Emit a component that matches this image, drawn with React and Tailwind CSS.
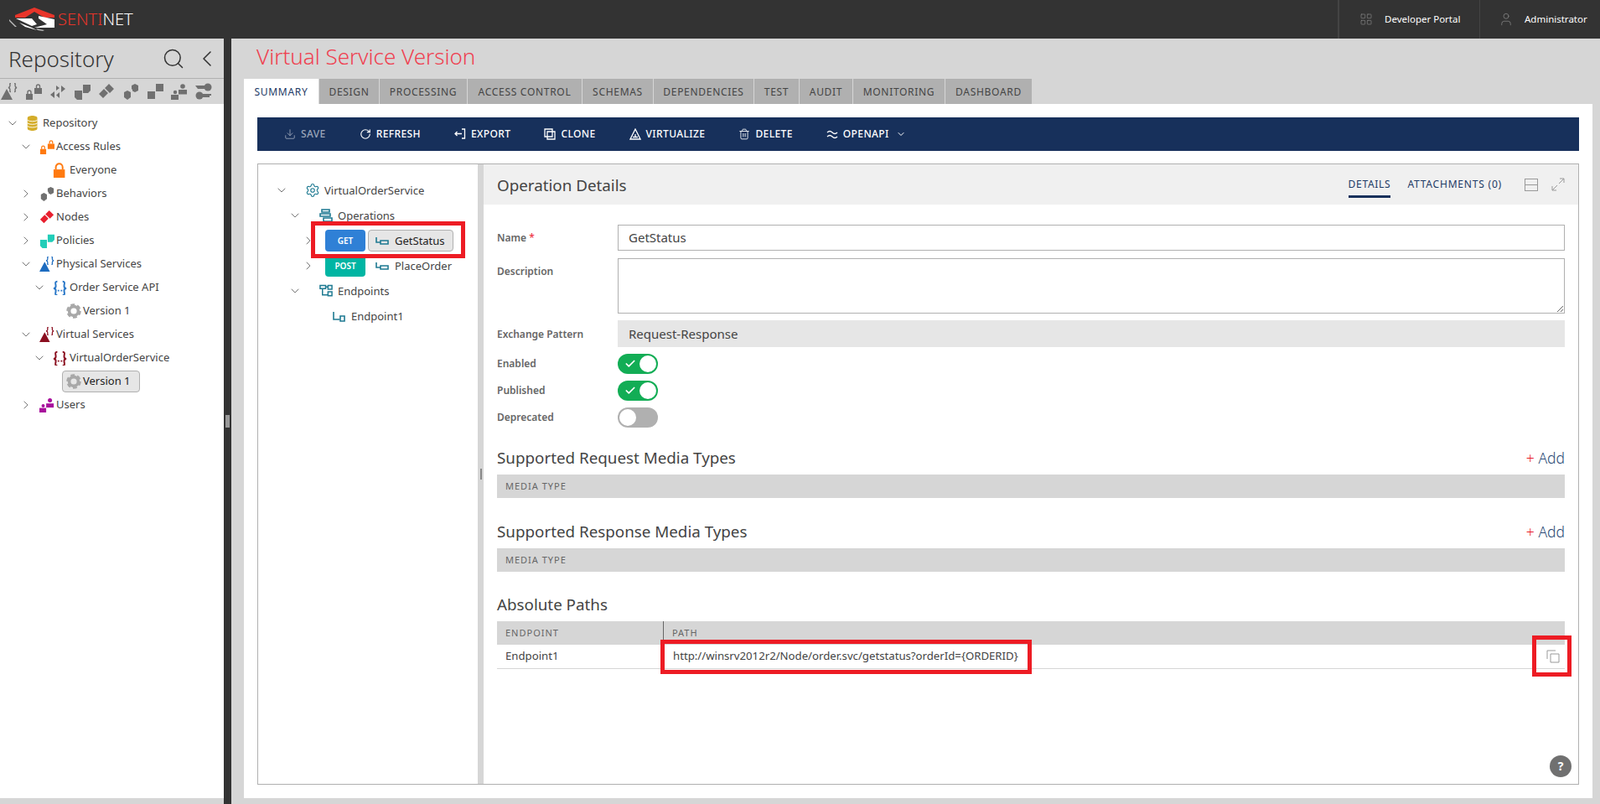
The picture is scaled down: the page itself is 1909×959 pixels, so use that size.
import React from 'react';
import { ChevronDown, ChevronRight, Search, ChevronLeft, Settings, LayoutGrid, User, RotateCw, Download, Trash2, Check } from 'lucide-react';

const Tri = ({ color }) => (
  <>
    <path d="M0 20 L7 7 L14 20 Z" fill={color} />
    <path d="M12 0.500c-2 0-1 1.500-1 2.500s0 2-2 2.500c2 .5 2 1.500 2 2.500s-1 2.500 1 2.500M16 0.500c2 0 1 1.500 1 2.500s0 2 2 2.500c-2 .5-2 1.500-2 2.500s1 2.500-1 2.500" fill="none" stroke={color} strokeWidth="1.400" />
  </>
);
const Locks = ({ color }) => (
  <>
    <path d="M1 13h8v7H1zM11 6h9v7h-9z" fill={color} />
    <path d="M3 13v-2a2 2 0 0 1 4 0v2M13.500 6V4a2 2 0 0 1 4 0v2" fill="none" stroke={color} strokeWidth="1.400" />
  </>
);
const Arrows = ({ color }) => (
  <path d="M1 14l5-4v8zM19 7l-5-4v8zM8 9V3l4 3-4 3zM12 11v7l-4-3.500z" fill={color} />
);
const Pages = ({ color }) => <path d="M1 9h9v11H4l-3-3zM11 2h9v7l-3 3h-6z" fill={color} />;
const Diamonds = ({ color }) => <path d="M1 13l6-6 5 5-6 6zM8 6l5-5 6 6-5 5z" fill={color} />;
const Hexes = ({ color }) => <path d="M2 11l4-2 4 2v6l-4 3-4-3zM11 3l4-2 4 2v6l-4 2-3-1.500V8l-1-1z" fill={color} />;
const Squares = ({ color }) => <path d="M1 10h9v9H1zM11 1h9v9h-9z" fill={color} />;
const People = ({ color }) => (
  <>
    <circle cx="5" cy="11" r="2.200" fill={color} />
    <path d="M0 14h9v6H0z" fill={color} />
    <circle cx="14" cy="4" r="2.800" fill={color} />
    <path d="M9 8h10v5.500H9z" fill={color} />
  </>
);
const Keys = ({ color }) => (
  <>
    <circle cx="15" cy="5" r="4.500" fill={color} />
    <path d="M0 3h12v4H3z" fill={color} />
    <circle cx="5" cy="15" r="4.500" fill={color} />
    <path d="M8 13h11v2h-2v2H8z" fill={color} />
  </>
);
const Database = ({ color }) => (
  <>
    <path d="M2 3c0-4 13-4 13 0v14c0 4-13 4-13 0z" fill={color} />
    <path d="M2 6c3 2 10 2 13 0M2 10c3 2 10 2 13 0M2 14c3 2 10 2 13 0" fill="none" stroke="#fff" strokeWidth="1" />
  </>
);
const Lock = ({ color }) => (
  <>
    <path d="M1 9h15v11H1z" fill={color} />
    <path d="M4 9V6a4.500 4.500 0 0 1 9 0v3" fill="none" stroke={color} strokeWidth="2.200" />
  </>
);
const Braces = ({ color }) => (
  <>
    <path d="M6 2C2 2 4 5 4 8s-3 3-3 3 3 0 3 3-2 6 2 6M13 2c4 0 2 3 2 6s3 3 3 3-3 0-3 3 2 6-2 6" fill="none" stroke={color} strokeWidth="2.200" />
    <path d="M6.500 13h2v2h-2zM10.500 13h2v2h-2z" fill={color} />
  </>
);
const Gear = ({ color }) => (
  <>
    <circle cx="10" cy="10" r="6" fill="none" stroke={color} strokeWidth="4" />
    <circle cx="10" cy="10" r="8.500" fill="none" stroke={color} strokeWidth="2.500" strokeDasharray="5.500 3.400" />
  </>
);
const Ops = () => (
  <g fill="none" stroke="#1f7a92" strokeWidth="1.600">
    <path d="M3 1h9v3H3zM1 6h12v3H1zM5 11h10v4H5z" />
  </g>
);
const EpTree = () => (
  <g fill="none" stroke="#1f7a92" strokeWidth="1.600">
    <path d="M1 1h7v4H1zM11 1h5v5h-5zM11 9h5v5h-5zM4 5v8h7M8 3h3" />
  </g>
);
const OpLine = () => (
  <g fill="none" stroke="#1f7a92" strokeWidth="1.600">
    <path d="M1 1v6h5M6 5h9v4H6z" />
  </g>
);
const EpLine = () => (
  <g fill="none" stroke="#1f7a92" strokeWidth="1.600">
    <path d="M1 1v9h7M9 6h5v6H9z" />
  </g>
);

const sideIcons = [Tri, Locks, Arrows, Pages, Diamonds, Hexes, Squares, People, Keys];

const repoRows = [
  { pad: 'pl-[7px]', open: true, icon: Database, color: '#d4ad2a', label: 'Repository' },
  { pad: 'pl-[23px]', open: true, icon: Locks, color: '#ff7a10', label: 'Access Rules' },
  { pad: 'pl-[39px]', icon: Lock, color: '#ff7a10', label: 'Everyone' },
  { pad: 'pl-[23px]', open: false, icon: Hexes, color: '#707070', label: 'Behaviors' },
  { pad: 'pl-[23px]', open: false, icon: Diamonds, color: '#e8202f', label: 'Nodes' },
  { pad: 'pl-[23px]', open: false, icon: Pages, color: '#22cdb8', label: 'Policies' },
  { pad: 'pl-[23px]', open: true, icon: Tri, color: '#1d6cc0', label: 'Physical Services' },
  { pad: 'pl-[39px]', open: true, icon: Braces, color: '#2a78c8', label: 'Order Service API' },
  { pad: 'pl-[55px]', icon: Gear, color: '#a8a8a8', label: 'Version 1' },
  { pad: 'pl-[23px]', open: true, icon: Tri, color: '#8b0f20', label: 'Virtual Services' },
  { pad: 'pl-[39px]', open: true, icon: Braces, color: '#8b0f20', label: 'VirtualOrderService' },
  { pad: 'pl-[55px]', icon: Gear, color: '#a8a8a8', label: 'Version 1', selected: true },
  { pad: 'pl-[23px]', open: false, icon: People, color: '#a8109c', label: 'Users' },
];

const tabs = [
  { label: 'SUMMARY', w: 'w-[89px]', active: true },
  { label: 'DESIGN', w: 'w-[71px]' },
  { label: 'PROCESSING', w: 'w-[104px]' },
  { label: 'ACCESS CONTROL', w: 'w-[136px]' },
  { label: 'SCHEMAS', w: 'w-[84px]' },
  { label: 'DEPENDENCIES', w: 'w-[119px]' },
  { label: 'TEST', w: 'w-[53px]' },
  { label: 'AUDIT', w: 'w-[63px]' },
  { label: 'MONITORING', w: 'w-[109px]' },
  { label: 'DASHBOARD', w: 'w-[103px]' },
];

const Arrow = ({ open }) => (
  <span className="w-[24px] shrink-0 flex">
    {open === undefined ? null : open
      ? <ChevronDown size={16} strokeWidth={1.5} className="text-[#777]" />
      : <ChevronRight size={16} strokeWidth={1.5} className="text-[#777]" />}
  </span>
);

const TreeIcon = ({ icon: Icon, color }) => (
  <svg width="18" height="18" viewBox="0 0 20 20" className="shrink-0"><Icon color={color} /></svg>
);

const Toggle = ({ on }) => (
  <span className={`w-12 h-6 rounded-full flex items-center px-[2px] ${on ? 'bg-[#12ad55] justify-end' : 'bg-[#b0b0b0] justify-start'} relative`}>
    {on && <Check size={14} strokeWidth={3} className="absolute left-[8px] text-white" />}
    <span className="w-5 h-5 rounded-full bg-white" />
  </span>
);

const ToolBtn = ({ icon, label, dim }) => (
  <span className={`flex items-center gap-[6px] tracking-[0.4px] font-medium text-xs ${dim ? 'text-[#9aa5b8]' : 'text-white'}`}>
    {icon}
    {label}
  </span>
);

const SectionHead = ({ title }) => (
  <div className="flex items-center justify-between h-7 -mt-[1px]">
    <span className="text-[18.8px] text-[#444]">{title}</span>
    <span className="text-[17.5px] font-light text-[#2a4a75]"><span className="text-[#e8202f]">+</span> Add</span>
  </div>
);

const Band = ({ label }) => (
  <div className="h-7 mt-[6px] bg-[#d6d6d6] flex items-center pl-[10px] text-[11px] tracking-[1px] text-[#666]">{label}</div>
);

export default function App() {
  return (
    <div className="w-[1909px] h-[959px] overflow-hidden flex flex-col bg-[#d6d6d6] text-[13px] text-[#444] font-['Open_Sans','Noto_Sans',sans-serif]">
      {/* top bar */}
      <header className="h-[46px] shrink-0 bg-[#333] flex items-center">
        <div className="flex items-center pl-[8px] flex-1">
          <svg width="61" height="36" viewBox="0 0 61 36">
            <path d="M10 13 L33 4 L57 13 L57 16 L45 16 L33 9 L22 16 L10 16 Z" fill="#e8352a" />
            <path d="M11 17 L30 17 L36 24 L30 26 Z M38 14 L57 18 L57 28 L33 28 L48 24 L38 17 Z M15 22 L30 28 L36 31 L22 27 Z" fill="#fff" />
            <path d="M3 18 L12 27 L10 27 L3 20 Z M35 29 L45 31 L43 32 L37 31 Z" fill="#bbb" />
          </svg>
          <span className="text-[20px] font-light text-white leading-none"><span className="text-[#e8352a]">SENTI</span>NET</span>
        </div>
        <div className="h-full flex items-center w-[169px] border-l-2 border-[#444] pl-[24px] gap-[14px] text-[11.5px] text-white">
          <LayoutGrid size={16} strokeWidth={1} className="text-[#888]" />
          Developer Portal
        </div>
        <div className="h-full flex items-center w-[144px] border-l border-[#444] pl-[22px] gap-[13px] text-[11.5px] text-white">
          <User size={18} strokeWidth={1} className="text-[#888]" />
          Administrator
        </div>
      </header>

      <div className="flex-1 flex min-h-0">
        {/* repository sidebar */}
        <aside className="w-[267px] shrink-0 flex flex-col pb-[7px]">
          <div className="h-[48px] flex items-center pl-[10px] border-b border-[#b0b0b0]">
            <span className="text-[26px] font-light text-[#333] flex-1 pt-[2px]">Repository</span>
            <Search size={28} strokeWidth={1.3} className="text-[#333] mr-[10px]" />
            <ChevronLeft size={32} strokeWidth={1.2} className="text-[#333] mr-[4px]" />
          </div>
          <div className="h-[30px] flex items-center pl-[1px] gap-[9px]">
            {sideIcons.map((Icon, i) => (
              <svg key={i} width="20" height="20" viewBox="0 0 20 20" className="shrink-0"><Icon color="#707070" /></svg>
            ))}
          </div>
          <div className="flex-1 bg-white pt-[9px]">
            {repoRows.map((r, i) => (
              <div key={i} className={`h-7 flex items-center ${r.pad}`}>
                <Arrow open={r.open} />
                {r.selected ? (
                  <span className="flex items-center gap-[2px] h-[26px] w-[93px] -ml-[5px] pl-[4px] bg-[#e6e6e6] border border-[#b0b0b0] rounded-sm text-[#222]">
                    <TreeIcon icon={r.icon} color={r.color} />
                    {r.label}
                  </span>
                ) : (
                  <span className="flex items-center gap-[2px]">
                    <TreeIcon icon={r.icon} color={r.color} />
                    {r.label}
                  </span>
                )}
              </div>
            ))}
          </div>
        </aside>

        {/* splitter */}
        <div className="w-[9px] shrink-0 bg-[#333] flex items-center justify-center">
          <span className="w-[5px] h-[15px] bg-[#999]" />
        </div>

        {/* main */}
        <main className="flex-1 min-w-0 flex flex-col pl-[15px] pr-[9px] pb-[7px]">
          <h1 className="h-[48px] flex items-center pl-[15px] pb-[5px] text-[26px] font-light text-[#ef4050]">Virtual Service Version</h1>
          <nav className="h-[30px] flex gap-[1px] shrink-0">
            {tabs.map((t) => (
              <span key={t.label} className={`h-full pt-[1px] flex items-center justify-center text-xs tracking-[0.7px] ${t.w} ${t.active ? 'bg-white text-[#1d3a66]' : 'bg-[#b0b0b0] text-[#444]'}`}>{t.label}</span>
            ))}
          </nav>
          <section className="flex-1 min-h-0 bg-white p-4 flex flex-col">
            <div className="h-10 shrink-0 bg-[#17305b] flex items-center gap-[40px] pl-[32px]">
              <ToolBtn dim label="SAVE" icon={<Download size={14} strokeWidth={1.5} />} />
              <ToolBtn label="REFRESH" icon={<RotateCw size={14} strokeWidth={2} />} />
              <ToolBtn label="EXPORT" icon={
                <svg width="14" height="14" viewBox="0 0 14 14" fill="none" stroke="currentColor" strokeWidth="1.300"><path d="M9 1h3.500v11H9M9 6.500H1M3.500 4l-2.500 2.500L3.500 9" /></svg>
              } />
              <ToolBtn label="CLONE" icon={
                <svg width="14" height="14" viewBox="0 0 14 14" fill="none" stroke="currentColor" strokeWidth="1.300"><path d="M1 1h9v9H1zM4 4h9v9H4z" /></svg>
              } />
              <ToolBtn label="VIRTUALIZE" icon={
                <svg width="14" height="14" viewBox="0 0 14 14" fill="none" stroke="currentColor" strokeWidth="1.300"><path d="M7 1l6 12H1zM7 7v3M4 10.500h6" /></svg>
              } />
              <ToolBtn label="DELETE" icon={<Trash2 size={14} strokeWidth={1.5} />} />
              <ToolBtn label={<span className="flex items-center gap-2">OPENAPI<ChevronDown size={12} strokeWidth={2} /></span>} icon={
                <svg width="14" height="14" viewBox="0 0 14 14" fill="none" stroke="currentColor" strokeWidth="1.300"><path d="M1 5c2-2 4-2 6 0s4 2 6 0M1 10c2-2 4-2 6 0s4 2 6 0" /></svg>
              } />
            </div>

            <div className="flex-1 min-h-0 mt-[15px] border border-[#b0b0b0] flex">
              {/* operations tree */}
              <div className="w-[262px] shrink-0 pt-[16px] text-[13px] relative">
                <div className="h-[30px] flex items-center pl-[20px]">
                  <ChevronDown size={16} strokeWidth={1.5} className="text-[#777]" />
                  <Settings size={18} strokeWidth={1.5} className="text-[#1f7a92] ml-[20px]" />
                  <span className="ml-[5px] pt-[2px]">VirtualOrderService</span>
                </div>
                <div className="h-[30px] flex items-center pl-[36px]">
                  <ChevronDown size={16} strokeWidth={1.5} className="text-[#777]" />
                  <svg width="16" height="16" viewBox="0 0 16 16" className="ml-[21px]"><Ops /></svg>
                  <span className="ml-[6px] pt-[2px]">Operations</span>
                </div>
                <div className="h-[30px] flex items-center pl-[52px] relative">
                  <ChevronRight size={16} strokeWidth={1.5} className="text-[#777]" />
                  <span className="ml-[12px] w-12 h-[26px] bg-[#2f80d6] rounded-sm text-white text-[10px] font-semibold flex items-center justify-center">GET</span>
                  <span className="ml-[3px] w-[102px] h-[26px] flex items-center gap-[7px] pl-[8px] bg-[#e6e6e6] border border-[#b0b0b0] rounded-sm text-[#222]">
                    <svg width="16" height="11" viewBox="0 0 16 11"><OpLine /></svg>
                    <span className="pt-[2px]">GetStatus</span>
                  </span>
                  <span className="absolute left-[63px] -top-[8px] w-[184px] h-[44px] border-[5px] border-[#ed1c24]" />
                </div>
                <div className="h-[30px] flex items-center pl-[52px]">
                  <ChevronRight size={16} strokeWidth={1.5} className="text-[#777]" />
                  <span className="ml-[12px] w-12 h-[26px] bg-[#00b5a3] rounded-sm text-white text-[10px] font-semibold flex items-center justify-center">POST</span>
                  <span className="ml-[12px] flex items-center gap-[7px]">
                    <svg width="16" height="11" viewBox="0 0 16 11"><OpLine /></svg>
                    <span className="pt-[2px]">PlaceOrder</span>
                  </span>
                </div>
                <div className="h-[30px] flex items-center pl-[36px]">
                  <ChevronDown size={16} strokeWidth={1.5} className="text-[#777]" />
                  <svg width="16" height="16" viewBox="0 0 17 16" className="ml-[21px]"><EpTree /></svg>
                  <span className="ml-[6px] pt-[2px]">Endpoints</span>
                </div>
                <div className="h-[30px] flex items-center pl-[89px]">
                  <svg width="16" height="13" viewBox="0 0 16 13"><EpLine /></svg>
                  <span className="ml-[6px] pt-[2px]">Endpoint1</span>
                </div>
              </div>

              {/* inner splitter */}
              <div className="w-[7px] shrink-0 bg-[#d6d6d6] flex items-center justify-center">
                <span className="w-[2px] h-[13px] bg-[#888]" />
              </div>

              {/* details */}
              <div className="flex-1 min-w-0 flex flex-col relative">
                <div className="h-[48px] shrink-0 bg-[#f0f0f0] flex items-center pl-[16px] pr-[16px]">
                  <span className="text-[18.8px] text-[#444] flex-1 pt-[2px]">Operation Details</span>
                  <span className="h-[30px] mt-[2px] border-b-[3px] border-[#17305b] flex items-center text-xs tracking-[0.7px] text-[#1d3a66] mr-[20px]">DETAILS</span>
                  <span className="text-xs tracking-[0.8px] text-[#1d3a66] mr-[27px]">ATTACHMENTS (0)</span>
                  <span className="w-4 h-[15px] border border-[#999] flex items-center mr-[16px]"><span className="w-full h-px bg-[#999]" /></span>
                  <svg width="16" height="16" viewBox="0 0 16 16" fill="none" stroke="#999" strokeWidth="1"><path d="M10 1h5v5M15 1L9 7M6 15H1v-5M1 15l6-6" /></svg>
                </div>

                <div className="flex-1 min-h-0 pl-[16px] pr-[16px] pt-[24px] flex flex-col">
                  <div className="h-[31px] flex items-center">
                    <label className="w-[144px] text-xs font-semibold text-[#666]">Name <span className="text-[#ef4050]">*</span></label>
                    <div className="flex-1 h-full border border-[#b0b0b0] flex items-center pl-3 text-[15px]">GetStatus</div>
                  </div>
                  <div className="h-[66px] mt-[9px] flex items-start">
                    <label className="w-[144px] text-xs font-semibold text-[#666] pt-[8px]">Description</label>
                    <textarea className="flex-1 h-full border border-[#b0b0b0]" />
                  </div>
                  <div className="h-[32px] mt-[8px] flex items-center">
                    <label className="w-[144px] text-xs font-semibold text-[#666] pt-[1px]">Exchange Pattern</label>
                    <div className="flex-1 h-full bg-[#e6e6e6] flex items-center pl-[13px] text-[15px]">Request-Response</div>
                  </div>
                  <div className="h-6 mt-2 flex items-center">
                    <label className="w-[144px] text-xs font-semibold text-[#666]">Enabled</label>
                    <Toggle on />
                  </div>
                  <div className="h-6 mt-2 flex items-center">
                    <label className="w-[144px] text-xs font-semibold text-[#666]">Published</label>
                    <Toggle on />
                  </div>
                  <div className="h-6 mt-2 flex items-center">
                    <label className="w-[144px] text-xs font-semibold text-[#666]">Deprecated</label>
                    <Toggle />
                  </div>

                  <div className="mt-[23px]"><SectionHead title="Supported Request Media Types" /></div>
                  <Band label="MEDIA TYPE" />
                  <div className="mt-[27px]"><SectionHead title="Supported Response Media Types" /></div>
                  <Band label="MEDIA TYPE" />

                  <div className="mt-[25px] h-7 flex items-center text-[18.8px] text-[#444]">Absolute Paths</div>
                  <div className="mt-[6px] h-7 bg-[#d6d6d6] flex items-center text-[11px] tracking-[1px] text-[#666]">
                    <span className="w-[199px] pl-[10px] border-r border-[#666] h-full flex items-center">ENDPOINT</span>
                    <span className="pl-[10px]">PATH</span>
                  </div>
                  <div className="h-[29px] border-b border-[#d6d6d6] flex items-center text-[13.2px] relative">
                    <span className="w-[199px] pl-[10px]">Endpoint1</span>
                    <span className="pl-[11px]">http://winsrv2012r2/Node/order.svc/getstatus?orderId={'{ORDERID}'}</span>
                    <span className="absolute left-[195px] -top-[6px] w-[443px] h-[41px] border-[5px] border-[#ed1c24]" />
                    <svg width="16" height="16" viewBox="0 0 16 16" fill="none" stroke="#999" strokeWidth="1" className="absolute right-[6px] top-[6px]"><path d="M1 11V1h10M5 5h10v10H5z" /></svg>
                    <span className="absolute -right-[8px] -top-[11px] w-[47px] h-[49px] border-[5px] border-[#ed1c24]" />
                  </div>
                </div>

                <span className="absolute right-[8px] bottom-[8px] w-[26px] h-[26px] rounded-full bg-[#707070] text-white font-bold text-sm flex items-center justify-center">?</span>
              </div>
            </div>
          </section>
        </main>
      </div>
    </div>
  );
}
